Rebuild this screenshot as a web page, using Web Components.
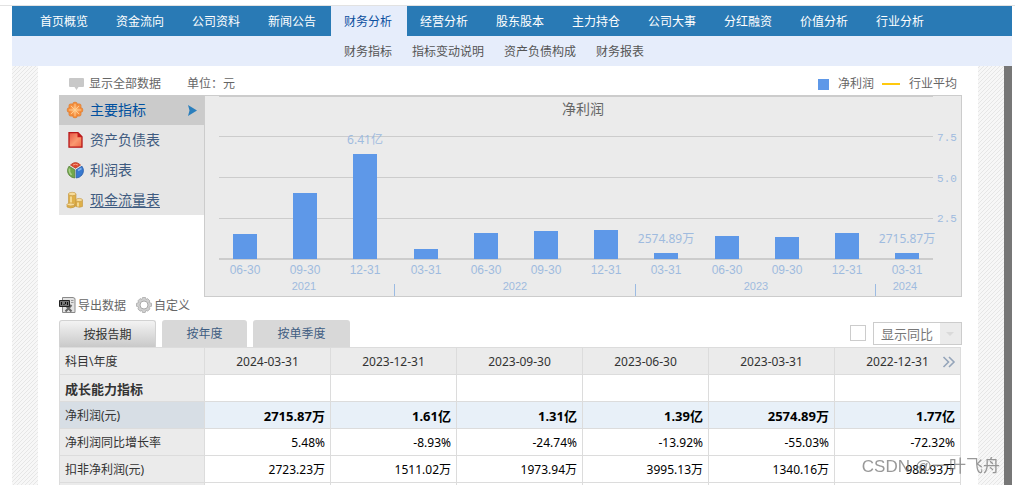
<!DOCTYPE html>
<html lang="zh-CN">
<head>
<meta charset="utf-8">
<title>财务分析</title>
<style>
html, body { margin: 0; height: 100%; }
body { font: 12px/16px "Noto Sans", "Noto Sans CJK SC", sans-serif; color: #666; background: #fff; overflow: hidden; }
</style>
</head>
<body>
<finance-page></finance-page>
<script>
const define = (name, html, setup) => {
  const template = document.createElement('template');
  template.innerHTML = '<style>*{box-sizing:border-box}a{color:inherit;text-decoration:none}button{font:inherit;border:0;padding:0;background:none;color:inherit}</style>' + html;
  customElements.define(name, class extends HTMLElement {
    connectedCallback() {
      if (this.shadowRoot) return;
      this.attachShadow({ mode: 'open' }).append(template.content.cloneNode(true));
      if (setup) setup(this, this.shadowRoot);
    }
  });
};

define('main-nav', `
<style>
:host { display: block; background: #297ab5; color: #fff; }
nav { display: flex; height: 30px; padding-left: 15px; }
a { padding: 0 14px 0 13px; width: 76px; line-height: 32px; white-space: nowrap; }
a[aria-current] { background: #e6edfb; color: #0b4f9e; }
</style>
<nav>
<a href="#">首页概览</a><a href="#">资金流向</a><a href="#">公司资料</a><a href="#">新闻公告</a><a href="#" aria-current="page">财务分析</a><a href="#">经营分析</a><a href="#">股东股本</a><a href="#">主力持仓</a><a href="#">公司大事</a><a href="#">分红融资</a><a href="#">价值分析</a><a href="#">行业分析</a>
</nav>`);

define('sub-nav', `
<style>
:host { display: block; background: #e6edfb; color: #555; }
nav { display: flex; gap: 20px; height: 30px; padding-left: 332px; line-height: 32px; }
a { white-space: nowrap; }
</style>
<nav><a href="#">财务指标</a><a href="#">指标变动说明</a><a href="#">资产负债构成</a><a href="#">财务报表</a></nav>`);

define('chart-legend', `
<style>
:host { display: flex; align-items: center; height: 29px; padding: 7px 5px 0 10px; }
svg { margin-right: 5px; }
.unit { margin-left: 26px; flex: 1; }
.bar { width: 11px; height: 11px; background: #5e98e8; margin-right: 9px; }
.line { width: 18px; height: 2px; background: #ffc90e; margin: 0 9px 0 8px; }
</style>
<svg width="15" height="12" viewBox="0 0 15 12"><path d="M1 0h13q1 0 1 1v7q0 1-1 1H9.500L7.500 12 5.500 9H1Q0 9 0 8V1q0-1 1-1z" fill="#c8c8c8"/></svg>
<span>显示全部数据</span><span class="unit">单位：元</span>
<span class="bar"></span><span>净利润</span><span class="line"></span><span>行业平均</span>`);

define('menu-item', `
<style>
:host { display: block; background: #e6e6e6; color: #3f5b80; font-size: 14px; }
:host([active]) { background: #cbcbcb; color: #00509f; }
:host([underlined]) a span { text-decoration: underline; text-underline-offset: 2px; }
a { display: flex; align-items: center; height: 30px; padding: 0 7px; gap: 6px; }
.mark { display: none; margin-left: auto; }
:host([active]) .mark { display: block; }
</style>
<a href="#"><slot name="icon"></slot><span><slot></slot></span>
<svg class="mark" width="9" height="12" viewBox="0 0 9 12"><path d="M0 1l9 5.500L0 12l1.500-5.500z" fill="#2b7fbd"/></svg></a>`);

define('side-menu', `
<style>:host { display: block; width: 145px; flex: none; } svg { display: block; flex: none; }</style>
<nav>
<menu-item active><svg slot="icon" width="18" height="18" viewBox="0 0 18 18"><defs><radialGradient id="o"><stop offset="0" stop-color="#ffc27c"/><stop offset="1" stop-color="#f4893a"/></radialGradient></defs><g fill="#f7933f" stroke="#d8762c" stroke-width=".6"><circle cx="9" cy="3.600" r="2.500"/><circle cx="9" cy="14.400" r="2.500"/><circle cx="3.600" cy="9" r="2.500"/><circle cx="14.400" cy="9" r="2.500"/><circle cx="5.100" cy="5.100" r="2.300"/><circle cx="12.900" cy="5.100" r="2.300"/><circle cx="5.100" cy="12.900" r="2.300"/><circle cx="12.900" cy="12.900" r="2.300"/></g><circle cx="9" cy="9" r="5.600" fill="url(#o)"/><path d="M9 3v12M3 9h12M5 5l8 8M13 5l-8 8" stroke="#ffcf94" stroke-width=".9"/></svg>主要指标</menu-item>
<menu-item><svg slot="icon" width="18" height="18" viewBox="0 0 18 18"><defs><linearGradient id="r" x2="1" y2="1"><stop stop-color="#e65343"/><stop offset=".55" stop-color="#fa9a70"/><stop offset="1" stop-color="#ed6745"/></linearGradient></defs><path d="M3 1.700H12l4 4v10.500H3z" fill="url(#r)" stroke="#b71719" stroke-width="1.300"/><path d="M11.500 1.700L16 6.200h-4.500z" fill="#c51b1d"/></svg>资产负债表</menu-item>
<menu-item><svg slot="icon" width="18" height="18" viewBox="0 0 18 18"><path d="M9.500 7.200L4.500 4Q9.500-1 14.500 4z" fill="#df4930" stroke="#b8412b" stroke-width=".8"/><path d="M8.800 8.800L3 5.200Q0 10 3.200 14.200 5.500 16.800 8.800 17z" fill="#72a84a" stroke="#567f38" stroke-width=".8"/><path d="M10.200 8.800L16 5.200q3 4.800-.2 9-2.300 2.600-5.600 2.800z" fill="#3879cf" stroke="#285ea9" stroke-width=".8"/><path d="M3.500 7.500q-.8 3.500 2 6.500" fill="none" stroke="#a9d089" stroke-width="1.600"/><path d="M12 9.500l3.500-2" stroke="#83b4ed" stroke-width="1.600"/><path d="M7 4q2.500-1.500 5 0" stroke="#f6a184" fill="none"/></svg>利润表</menu-item>
<menu-item underlined><svg slot="icon" width="18" height="18" viewBox="0 0 18 18"><g fill="#deb04a" stroke="#c2943c" stroke-width=".6"><path d="M2.500 3v12q4 2 7.500 0V3z"/><ellipse cx="6.200" cy="3" rx="3.800" ry="1.700" fill="#f6dc9c"/><path d="M10 9v6.500q3.500 1.600 6.500 0V9z"/><ellipse cx="13.200" cy="9" rx="3.300" ry="1.600" fill="#f6dc9c"/><path d="M1 13.500V16q3.500 2 7.500 0v-2.500z"/><ellipse cx="4.700" cy="13.500" rx="3.700" ry="1.400" fill="#f6dc9c"/></g><path d="M5 5.500v6M12 11.500v4" stroke="#f5dc98" stroke-width="1.800"/></svg>现金流量表</menu-item>
</nav>`);

define('profit-chart', `
<style>
:host { display: block; flex: 1; min-width: 0; background: #ebebeb; }
svg { display: block; width: 100%; height: auto; }
.grid { stroke: #ccc; }
text { fill: #9fbbdf; text-anchor: middle; }
.title { fill: #666; font-size: 14px; }
.date { font: 12px "Liberation Sans", sans-serif; }
.year { font: 11px "Liberation Sans", sans-serif; }
.axis { font: 11px "Liberation Mono", monospace; }
.value { font-size: 12px; }
</style>
<svg viewBox="0 0 758 202" role="img" aria-label="净利润">
<rect x=".5" y=".5" width="757" height="201" fill="none" stroke="#ccc"/>
<path class="grid" d="M15 1.500h714M15 41.500h714M15 82.500h714M15 123.500h714"/>
<path d="M15 164h714" stroke="#ccc" stroke-width="2"/>
<path d="M190.500 189v12M431.500 189v12M671.500 189v12" stroke="#9bbbe3"/>
<text class="title" x="379" y="19">净利润</text>
<text class="axis" x="743" y="46">7.5</text><text class="axis" x="743" y="87">5.0</text><text class="axis" x="743" y="127">2.5</text>
<text class="year" x="100" y="195">2021</text><text class="year" x="311" y="195">2022</text><text class="year" x="552" y="195">2023</text><text class="year" x="701" y="195">2024</text>
<g id="bars"></g>
</svg>`, (host, root) => {
  const bars = [['06-30', 25], ['09-30', 66], ['12-31', 105, '6.41亿'], ['03-31', 10], ['06-30', 26], ['09-30', 28], ['12-31', 29],
    ['03-31', 6, '2574.89万'], ['06-30', 23], ['09-30', 22], ['12-31', 26], ['03-31', 6, '2715.87万']];
  root.getElementById('bars').innerHTML = bars.map(([date, height, value], i) => {
    const x = Math.round(41 + i * 60.2);
    return `<rect x="${x - 12}" y="${164 - height}" width="24" height="${height}" fill="#5e98e8"/>
      <text class="date" x="${x}" y="179">${date}</text>` +
      (value ? `<text class="value" x="${x}" y="${154 - height}">${value}</text>` : '');
  }).join('');
});

define('chart-tools', `
<style>
:host { display: flex; height: 23px; gap: 10px; align-items: flex-start; }
button { display: flex; gap: 2px; align-items: flex-start; line-height: 18px; }
svg { flex: none; }
</style>
<button type="button"><svg width="17" height="16" viewBox="0 0 17 16"><path d="M3.500.5H14l2 1v14H3.500z" fill="#e2e2e2" stroke="#8a8a8a"/><path d="M6.500 8l6 6.500M12.500 8l-6 6.500" stroke="#666" stroke-width="2"/><path d="M12 3.500h2.500M12 5.500h2.500" stroke="#999"/><path d="M.5 3.500h10v6H.5z" fill="#777" stroke="#222"/><path d="M2.500 5v3M4.500 7.500h1M6.500 5v2M8.500 5v3" stroke="#111"/></svg>导出数据</button>
<button type="button"><svg width="16" height="16" viewBox="0 0 16 16"><path d="M6.500.5h3l.6 2 1.500-.9 2.300 2.300-.9 1.600 2.500.8v3l-2.500.8.9 1.800-2.300 2.300-1.700-.9-.7 2.200H6.500l-.7-2.200-1.700.9-2.200-2.300.9-1.800-2.300-.8v-3l2.300-.8-.9-1.600 2.200-2.300 1.700.9z" fill="#cfcfcf" stroke="#a9a9a9" stroke-width=".8"/><circle cx="8" cy="8" r="4" fill="#fff" stroke="#aaa"/></svg>自定义</button>`);

define('period-tabs', `
<style>
:host { display: flex; height: 27px; gap: 6px; align-items: stretch; }
button { width: 85px; background: #d8d8d8; color: #3f5d82; border-radius: 3px 3px 0 0; line-height: 28px; }
.wide { width: 97px; }
button[aria-pressed=true] { color: #333; background: linear-gradient(#f3f3f3, #c9c9c9); border: 1px solid #d2d2d2; border-bottom: 0; }
.options { margin-left: auto; display: flex; gap: 7px; padding-top: 2px; }
input { appearance: none; margin: 3px 0 0; width: 16px; height: 16px; border: 1px solid #ccc; background: #fff; }
select { appearance: none; width: 89px; height: 23px; margin: 0; border: 1px solid #ccc; border-radius: 0; padding: 0 7px; font: inherit; font-size: 13px; line-height: 20px; color: #777;
  background: linear-gradient(90deg, transparent calc(100% - 21px), #ebebeb calc(100% - 21px)); }
.pick { position: relative; }
.pick svg { position: absolute; right: 8px; top: 10px; pointer-events: none; }
</style>
<button type="button" class="wide" aria-pressed="true">按报告期</button>
<button type="button" aria-pressed="false">按年度</button>
<button type="button" class="wide" aria-pressed="false">按单季度</button>
<div class="options"><input type="checkbox" aria-label="显示同比">
<span class="pick"><select aria-label="同比选项"><option>显示同比</option></select><svg width="8" height="4" viewBox="0 0 8 4"><path d="M0 0h8L4 4z" fill="#dadada"/></svg></span></div>`);

define('report-table', `
<style>
:host { display: block; padding-right: 1px; }
table { width: 100%; table-layout: fixed; border-collapse: separate; border-spacing: 0; border: solid #dcdcdc; border-width: 1px 0 0 1px; }
th, td { height: 27px; padding: 2px 5px 0; border: solid #dcdcdc; border-width: 0 1px 1px 0; text-align: right; color: #000; font-weight: 400; white-space: nowrap; }
th { background: #ebebeb; color: #333; }
thead th { text-align: center; position: relative; }
tr > th:first-child { width: 145px; text-align: left; }
.group th { font-size: 13px; font-weight: 700; }
.total th { background: #d7dee5; }
.total td { background: #e8f0f8; font-size: 13px; font-weight: 700; }
button { position: absolute; right: 4px; top: 8px; height: 12px; }
svg { display: block; }
</style>
<table><thead></thead><tbody></tbody></table>`, (host, root) => {
  const dates = ['2024-03-31', '2023-12-31', '2023-09-30', '2023-06-30', '2023-03-31', '2022-12-31'];
  const rows = [
    ['group', '成长能力指标', '', '', '', '', '', ''],
    ['total', '净利润(元)', '2715.87万', '1.61亿', '1.31亿', '1.39亿', '2574.89万', '1.77亿'],
    ['', '净利润同比增长率', '5.48%', '-8.93%', '-24.74%', '-13.92%', '-55.03%', '-72.32%'],
    ['', '扣非净利润(元)', '2723.23万', '1511.02万', '1973.94万', '3995.13万', '1340.16万', '988.93万'],
    ['', '', '', '', '', '', '', '']];
  const next = '<button type="button" aria-label="下一页"><svg width="14" height="12" viewBox="0 0 14 12"><path d="M1.500 1l5 5-5 5M7 1l5 5-5 5" fill="none" stroke="#95a5ba" stroke-width="1.600"/></svg></button>';
  root.querySelector('thead').innerHTML = '<tr><th scope="col">科目\\年度</th>' +
    dates.map((d, i) => `<th scope="col">${d}${i === dates.length - 1 ? next : ''}</th>`).join('') + '</tr>';
  root.querySelector('tbody').innerHTML = rows.map(([kind, name, ...cells]) =>
    `<tr class="${kind}"><th scope="row">${name}</th>${cells.map(c => `<td>${c}</td>`).join('')}</tr>`).join('');
});

define('finance-page', `
<style>
:host { display: flex; flex-direction: column; height: 100vh; overflow: hidden; box-sizing: border-box; padding: 6px 3px 0 12px; background: linear-gradient(#e2e2e2, #e2e2e2) 0 5px / 100% 1px no-repeat; }
main-nav, sub-nav { flex: none; }
.stage { flex: 1; min-height: 0; padding: 0 26px; border-right: 8px solid #777;
  background: linear-gradient(135deg, #f7f7f7 44%, #e6e6e6 44% 56%, #f7f7f7 56%) 0 0 / 4px 4px; }
main { height: 100%; padding: 0 16px 0 21px; background: #fff; overflow: hidden; }
.overview { display: flex; align-items: flex-start; }
.mark { position: fixed; right: 15px; bottom: 6px; font: 17px/24px "Liberation Sans", "Noto Sans CJK SC", sans-serif; color: rgba(110, 110, 110, .7); pointer-events: none; }
</style>
<main-nav></main-nav>
<sub-nav></sub-nav>
<div class="stage"><main>
<chart-legend></chart-legend>
<div class="overview"><side-menu></side-menu><profit-chart></profit-chart></div>
<chart-tools></chart-tools>
<period-tabs></period-tabs>
<report-table></report-table>
</main></div>
<div class="mark">CSDN @一叶飞舟</div>`);
</script>
</body>
</html>
